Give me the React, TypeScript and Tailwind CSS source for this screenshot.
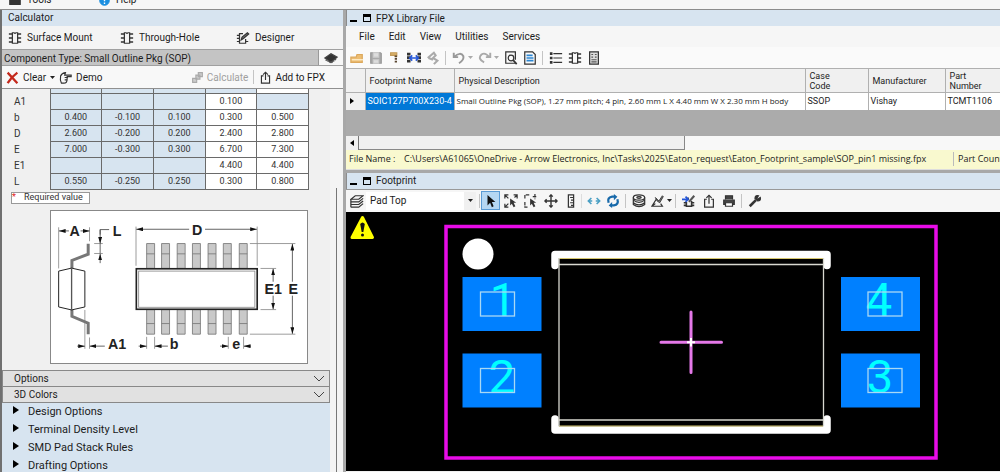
import type { ReactNode } from 'react';

const rows = [
  { name: 'A1', values: ['', '', '', '0.100', ''] },
  { name: 'b', values: ['0.400', '-0.100', '0.100', '0.300', '0.500'] },
  { name: 'D', values: ['2.600', '-0.200', '0.200', '2.400', '2.800'] },
  { name: 'E', values: ['7.000', '-0.300', '0.300', '6.700', '7.300'] },
  { name: 'E1', values: ['', '', '', '4.400', '4.400'] },
  { name: 'L', values: ['0.550', '-0.250', '0.250', '0.300', '0.800'] },
];

const treeItems = ['Design Options', 'Terminal Density Level', 'SMD Pad Stack Rules', 'Drafting Options'];
const menuItems = ['File', 'Edit', 'View', 'Utilities', 'Services'];

function Icon({ children, className = 'size-[14px]' }: { children: ReactNode; className?: string }) {
  return (
    <svg viewBox="0 0 16 16" className={`${className} shrink-0`} fill="none" stroke="#333" strokeWidth="1.4" aria-hidden="true">
      {children}
    </svg>
  );
}

function Tool({ label, children, active = false }: { label: string; children: ReactNode; active?: boolean }) {
  return (
    <button
      type="button"
      aria-label={label}
      className={`flex h-[19px] w-[19px] shrink-0 items-center justify-center ${active ? 'border border-[#5a9bd5] bg-[#b5d7f3]' : ''}`}
    >
      <Icon>{children}</Icon>
    </button>
  );
}

function Separator() {
  return <div className="mx-[3px] h-[14px] w-px shrink-0 bg-[#c4c4c4]" />;
}

function Caret({ gray = false }: { gray?: boolean }) {
  return (
    <svg viewBox="0 0 5 3" className="h-[3px] w-[5px] shrink-0" fill={gray ? '#aaa' : '#222'} aria-hidden="true">
      <path d="M0 0h5L2.500 3z" />
    </svg>
  );
}

function ChipPaths() {
  return (
    <>
      <path d="M5 2h2q1 1.500 2 0h2v12H5z" />
      <path d="M1 3.500h4M1 8h4M1 12.500h4M11 3.500h4M11 8h4M11 12.500h4" strokeWidth="1.8" />
    </>
  );
}

function SharePaths() {
  return (
    <>
      <path d="M5.500 6H3v9h10V6h-2.500M8 11V1.500" />
      <path d="M5 4.500l3-3 3 3" />
    </>
  );
}

function TitleBar({ title }: { title: string }) {
  return (
    <div className="flex h-4 items-center border-l border-[#8c8c8c] bg-[#d7e4f0] pl-[3px]">
      <button type="button" aria-label={`Minimize ${title}`} className="flex h-2 w-[7px] items-end">
        <span className="h-[2px] w-full bg-black" />
      </button>
      <button type="button" aria-label={`Maximize ${title}`} className="ml-[6px] h-2 w-2 border border-t-[3px] border-black" />
      <h2 className="ml-[5px] text-[10px]">{title}</h2>
    </div>
  );
}

function PackageDrawing() {
  const leads = [439, 484, 531, 577, 624, 670, 718];
  return (
    <svg viewBox="151 17 771 458" className="block w-full" role="img" aria-label="Small outline package dimensions">
      <defs>
        <marker id="tip" viewBox="0 0 20 12" refX="20" refY="6" markerWidth="20" markerHeight="12" markerUnits="userSpaceOnUse" orient="auto-start-reverse">
          <path d="M0 0L20 6L0 12z" fill="#111" />
        </marker>
      </defs>
      <g fill="none" stroke="#444" strokeWidth="2.500">
        <path d="M174 66V190M267 66V108M281 115H307M281 145H307M407 64V182M772 64V182M750 115H887M750 388H887M782 190H829M782 314H829M253 315V432M267 398V432M439 396V432M463 396V432M685 396V432M731 396V432" stroke="#888" />
        <path d="M326 73H299V88M299 115V145" />
        <path d="M205 77H175" markerEnd="url(#tip)" />
        <path d="M240 77H267" markerEnd="url(#tip)" />
        <path d="M299 73V115" markerEnd="url(#tip)" />
        <path d="M299 174V146" markerEnd="url(#tip)" />
        <path d="M567 72H408" markerEnd="url(#tip)" />
        <path d="M615 72H771" markerEnd="url(#tip)" />
        <path d="M820 230V191" markerEnd="url(#tip)" />
        <path d="M820 272V313" markerEnd="url(#tip)" />
        <path d="M878 230V116" markerEnd="url(#tip)" />
        <path d="M878 272V387" markerEnd="url(#tip)" />
        <path d="M230 424H253" markerEnd="url(#tip)" />
        <path d="M313 424H268" markerEnd="url(#tip)" />
        <path d="M415 424H439" markerEnd="url(#tip)" />
        <path d="M503 424H464" markerEnd="url(#tip)" />
        <path d="M660 424H685" markerEnd="url(#tip)" />
        <path d="M753 424H732" markerEnd="url(#tip)" />
      </g>
      {/* side view */}
      <path d="M263 116V147L214 166V334L263 355V388" fill="none" stroke="#777" strokeWidth="9" />
      <path d="M174 198L213 189L253 198V306L213 315L174 306z" fill="#fff" stroke="#222" strokeWidth="3" />
      <path d="M213 189V315" stroke="#555" strokeWidth="4" />
      {/* top view */}
      <g fill="#c9c9c9" stroke="#777" strokeWidth="2.500">
        {leads.map((x) => (
          <path key={x} d={`M${x} 115h24v75h-24zM${x} 146h24M${x} 314h24v74h-24zM${x} 356h24`} />
        ))}
      </g>
      <rect x="408" y="191" width="364" height="122" fill="#fff" stroke="#222" strokeWidth="5" />
      <rect x="415" y="198" width="350" height="109" fill="none" stroke="#888" strokeWidth="2.500" />
      <g className="font-['Liberation_Sans',sans-serif]" fontSize="43" fontWeight="700" fill="#222" textAnchor="middle">
        <text x="222" y="92">A</text>
        <text x="350" y="93">L</text>
        <text x="591" y="88">D</text>
        <text x="820" y="268">E1</text>
        <text x="881" y="268">E</text>
        <text x="350" y="434">A1</text>
        <text x="522" y="434">b</text>
        <text x="709" y="434">e</text>
      </g>
    </svg>
  );
}

function Pad({ x, y, tx, pin }: { x: number; y: number; tx: number; pin: string }) {
  return (
    <g>
      <rect x={x} y={y} width="79" height="54" fill="#0080ff" />
      <text x={tx} y={y + 39} fontSize="47" fill="#00ffff" textAnchor="middle">{pin}</text>
      <rect x={x < 700 ? x + 18 : x + 27} y={y + 15} width="34" height="24" fill="none" stroke="#a9d8f4" strokeWidth="1.300" />
    </g>
  );
}

function FootprintCanvas() {
  return (
    <svg viewBox="346 212 654 259" className="block w-full bg-black font-['Roboto',sans-serif]" role="img" aria-label="Footprint view">
      <path d="M362.500 217.500L372.500 237.500H352z" fill="#ffff00" stroke="#ffff00" strokeWidth="3" strokeLinejoin="round" />
      <path d="M360.200 224q2.300-3 4.600 0L363.300 232h-1.600z" fill="#111" />
      <circle cx="362.500" cy="235" r="1.500" fill="#111" />
      <rect x="446" y="226.500" width="490" height="231.500" fill="none" stroke="#e80ce8" strokeWidth="3.500" />
      <circle cx="478" cy="254" r="15.500" fill="#fff" />
      <Pad x={462.5} y={277} tx={503} pin="1" />
      <Pad x={462.5} y={353.5} tx={502} pin="2" />
      <Pad x={841} y={277} tx={879} pin="4" />
      <Pad x={841} y={353.5} tx={880} pin="3" />
      <g fill="none">
        <path d="M555 265.500V254.500H827V265.500M555 419V430H827V419" stroke="#fff" strokeWidth="7.500" strokeLinecap="round" strokeLinejoin="round" />
        <path d="M559 258.500H823M559 426H823" stroke="#d8c870" />
        <path d="M559 258V426M823.500 258V426M559 264.500H823M559 420H823" stroke="#d8d8d0" strokeWidth="1.300" />
        <path d="M661 342.300H721.500M691 312V372.500" stroke="#e478e8" strokeWidth="3" strokeLinecap="round" />
        <path d="M687 342.300H695M691 338V346.500" stroke="#fff" strokeWidth="2" />
      </g>
    </svg>
  );
}

function CalculatorPanel() {
  return (
    <section className="flex w-[343px] shrink-0 flex-col border-l-2 border-[#707070] bg-[#f0f0f0]">
      <h2 className="h-4 bg-[#d7e4f0] pl-[6px] text-[10px] leading-4">Calculator</h2>
      <nav className="flex h-[23px] items-center bg-[#f4f4f4] pl-[6px] text-[10px]">
        <button type="button" className="flex w-[112px] items-center gap-[5px]">
          <Icon><ChipPaths /></Icon>Surface Mount
        </button>
        <button type="button" className="flex w-[116px] items-center gap-[5px]">
          <Icon><ChipPaths /></Icon>Through-Hole
        </button>
        <button type="button" className="flex items-center gap-[5px]">
          <Icon><path d="M8 3H4v11h7V9M1 5h3M1 8.500h3M1 12h3M11 12h3" /><path d="M6 10l1-3 6-5 1.500 1.500-6 5z" fill="#777" /></Icon>Designer
        </button>
      </nav>
      <div className="flex h-[17px] items-stretch border-y border-[#a0a0a0] bg-[#c4c4c4]">
        <h3 className="flex-1 pl-[2px] text-[10px] leading-[17px]">Component Type: Small Outline Pkg (SOP)</h3>
        <button type="button" aria-label="Show package in 3D" className="flex w-[25px] items-center justify-center border-l border-[#999] bg-[#f7f7f7]">
          <Icon className="h-[14px] w-[16px]"><path d="M1 8l7-5 7 4-7 6z" fill="#333" stroke="#444" /><path d="M2 10l6 3.500L14 9" stroke="#555" strokeDasharray="1.500 1" strokeWidth="2" /></Icon>
        </button>
      </div>
      <div className="flex h-[22px] items-center bg-[#f8f8f8] pl-1 text-[10px]">
        <button type="button" className="flex items-center gap-1">
          <Icon className="size-[13px]"><path d="M2 2l12 13M14 2Q7 7 2 15" stroke="#c4291c" strokeWidth="2.800" /></Icon>Clear
          <Caret />
        </button>
        <button type="button" className="ml-1 flex items-center gap-1">
          <Icon className="size-[13px]"><path d="M2 6q2-4 6-4l-1 3h8v2h-5v3q0 5-4 5H3q-2-4-1-9zM7 8h4M7 11h3" /></Icon>Demo
        </button>
        <button type="button" disabled className="ml-auto flex items-center gap-[3px] text-[#a0a0a0]">
          <Icon className="size-[13px]"><path d="M9 2h5v5H9zM2 9h5v5H2zM6 5h5v5H6z" fill="#ccc" stroke="#aaa" /></Icon>Calculate
        </button>
        <div className="mx-[5px] h-[14px] w-px bg-[#c4c4c4]" />
        <button type="button" className="mr-[18px] flex items-center gap-[3px]">
          <Icon className="size-[13px]"><SharePaths /></Icon>Add to FPX
        </button>
      </div>
      <div className="flex flex-1 border-t border-[#909090]">
        <div className="min-w-0 flex-1">
          <div className="pr-[21px] pl-[9px]">
            <table className="w-full table-fixed border-collapse text-[9px] leading-[15px] text-[#333]">
              <colgroup>
                <col className="w-[39px]" />
              </colgroup>
              <tbody>
                <tr className="h-1">
                  <td />
                  {[0, 1, 2, 3].map((i) => (
                    <td key={i} className="border border-t-0 border-[#6a6a6a] bg-[#d7e4f0]" />
                  ))}
                  <td className="border border-t-0 border-[#6a6a6a] bg-white" />
                </tr>
                {rows.map((row) => (
                  <tr key={row.name} className="h-4">
                    <th scope="row" className="pl-[3px] text-left text-[10px] font-normal">{row.name}</th>
                    {row.values.map((value, i) => (
                      <td key={i} className={`border border-[#6a6a6a] p-0 text-center ${i < 3 || !value ? 'bg-[#d7e4f0]' : 'bg-white'}`}>
                        {value}
                      </td>
                    ))}
                  </tr>
                ))}
              </tbody>
            </table>
          </div>
          <div className="mt-[2px] ml-[9px] flex h-3 w-[79px] items-center border border-[#999] bg-white text-[9px] whitespace-nowrap text-[#333]">
            <span className="w-3 text-[#e02020]">*</span>Required value
          </div>
          <div className="mt-[6px] ml-12 w-[258px] border border-[#888] bg-white">
            <PackageDrawing />
          </div>
          <div className="mt-[6px]">
            {['Options', '3D Colors'].map((label) => (
              <button key={label} type="button" className="flex h-4 w-full items-center justify-between border border-b-0 border-[#888] bg-[#e1e1e1] pr-1 pl-[11px] text-[10px]">
                {label}
                <svg viewBox="0 0 12 7" className="h-[7px] w-3" fill="none" stroke="#444" aria-hidden="true">
                  <path d="M1 1l5 5 5-5" />
                </svg>
              </button>
            ))}
          </div>
          <ul className="border-t border-[#888] bg-[#d7e4f0] text-[11px] leading-[18px]">
            {treeItems.map((item) => (
              <li key={item}>
                <button type="button" className="flex w-full items-start pl-[11px] text-left">
                  <svg viewBox="0 0 6 8" className="mt-[3px] mr-[9px] h-2 w-[6px]" aria-hidden="true">
                    <path d="M0 0l6 4-6 4z" />
                  </svg>
                  {item}
                </button>
              </li>
            ))}
          </ul>
        </div>
        <div className="flex w-[13px] flex-col bg-[#f4f4f4] pt-[99px]">
          <div className="w-[7px] flex-1 border-r border-[#777]" />
        </div>
      </div>
    </section>
  );
}

function LibraryPanel() {
  const head = 'border-r border-[#b0b0b0] px-1 text-left align-middle font-normal';
  return (
    <section className="flex flex-col">
      <TitleBar title="FPX Library File" />
      <nav className="flex h-[21px] items-center gap-[14px] bg-[#f6f6f6] pl-[13px] text-[10px]">
        {menuItems.map((item) => (
          <button key={item} type="button">{item}</button>
        ))}
      </nav>
      <div className="flex h-[21px] items-center bg-[#fafafa] pl-px">
        <Tool label="Open"><path d="M1 13V7h6l1-3h6v9z" fill="#edbd72" stroke="#dca85c" /><path d="M2 10h13" stroke="#fff0d0" /></Tool>
        <Tool label="Save"><path d="M2 2h11l1 1v11H2z" fill="#aaa" stroke="#999" /><path d="M5 2h6v5H5zM5 10h6v4H5z" fill="#ddd" stroke="#ccc" /></Tool>
        <Tool label="Build part"><path d="M3 2h7v4H8V5H3z" fill="#d9b06a" stroke="#c39a58" /><path d="M9 5v9" stroke="#5a4630" strokeWidth="2.600" strokeDasharray="2 1" /></Tool>
        <Tool label="Link parts"><path d="M2 2v12M14 2v12" strokeWidth="4" strokeDasharray="3 1" /><path d="M4 8h8M10 5l3 3-3 3M6 5L3 8l3 3" stroke="#2456d8" strokeWidth="1.800" /></Tool>
        <Tool label="Tools"><path d="M2 8l7-6 2 3-3 3 5 3-4 4M3 8l5 2" stroke="#aaa" strokeWidth="2.400" /></Tool>
        <Separator />
        <Tool label="Undo"><path d="M2 2v5h5M2 7q8-7 11-1 1 4-5 8" stroke="#999" strokeWidth="2.200" /></Tool>
        <Caret gray />
        <div className="w-[2px]" />
        <Tool label="Redo"><path d="M14 2v5H9M13 7Q8 1 4 4q-5 5 3 9" stroke="#aaa" strokeWidth="2.200" /></Tool>
        <Caret gray />
        <div className="w-[2px]" />
        <Tool label="Preview"><path d="M13 14H2V1h11v9" /><circle cx="8" cy="8" r="3.200" /><path d="M10.500 10.500l4 4.500" strokeWidth="2" /></Tool>
        <Tool label="Report"><path d="M2 1h9l3 3v11H2z" /><path d="M4 5h7M4 8h8M4 11h8" stroke="#2d87d3" strokeWidth="1.800" /></Tool>
        <Separator />
        <Tool label="List"><path d="M5 3h10M5 8h10M5 13h10" /><path d="M1 3h3M1 8h3M1 13h3" strokeWidth="3" /></Tool>
        <Tool label="Component"><ChipPaths /></Tool>
        <Tool label="Calculator"><path d="M3 1h10v14H3z" fill="#ddd" /><path d="M5 4h2M9 4h2M5 7h2M9 7h2M5 10h6M5 12.500h6" stroke="#555" /></Tool>
      </div>
      <div className="overflow-hidden bg-[#ababab] pb-[26px]">
        <table className="w-full table-fixed border-collapse text-[9px] leading-[10px] text-[#222]">
          <colgroup>
            <col className="w-[19px]" />
            <col className="w-[89px]" />
            <col />
            <col className="w-[63px]" />
            <col className="w-[77px]" />
            <col className="w-[55px]" />
          </colgroup>
          <thead>
            <tr className="h-6 border-y border-[#b0b0b0] bg-[#f0f0f0]">
              <td className="border-r border-[#b0b0b0]" />
              <th scope="col" className={head}>Footprint Name</th>
              <th scope="col" className={head}>Physical Description</th>
              <th scope="col" className={head}>Case<br />Code</th>
              <th scope="col" className={head}>Manufacturer</th>
              <th scope="col" className="px-1 text-left font-normal">Part<br />Number</th>
            </tr>
          </thead>
          <tbody>
            <tr className="h-[17px] bg-white whitespace-nowrap">
              <td className="border-r border-[#b0b0b0] bg-[#f0f0f0] p-0">
                <svg viewBox="0 0 4 6" className="ml-1 h-[6px] w-1" aria-hidden="true"><path d="M0 0l4 3-4 3z" /></svg>
              </td>
              <td className="border-r border-[#b0b0b0] bg-[#0078d7] px-[2px] text-white">SOIC127P700X230-4</td>
              <td className="border-r border-[#b0b0b0] px-[2px] font-['Open_Sans',sans-serif] text-[8px]">Small Outline Pkg (SOP), 1.27 mm pitch; 4 pin, 2.60 mm L X 4.40 mm W X 2.30 mm H body</td>
              <td className="border-r border-[#b0b0b0] px-[2px]">SSOP</td>
              <td className="border-r border-[#b0b0b0] px-[2px]">Vishay</td>
              <td className="px-[2px]">TCMT1106</td>
            </tr>
          </tbody>
        </table>
      </div>
      <div className="flex h-[14px] bg-[#f8f8f8]">
        <button type="button" aria-label="Scroll left" className="flex w-[13px] items-center justify-center border-r border-[#777] bg-[#f0f0f0]">
          <svg viewBox="0 0 4 6" className="h-[6px] w-1" aria-hidden="true"><path d="M4 0L0 3l4 3z" /></svg>
        </button>
        <div className="w-[326px] border-r border-b border-[#888] bg-[#f0f0f0]" />
      </div>
      <div className="flex h-5 items-center overflow-hidden border-b border-[#ddd] bg-[#f9f9cf] pl-[3px] font-['Open_Sans',sans-serif] text-[9px] whitespace-nowrap">
        <span className="w-[55px] shrink-0">File Name :</span>
        <span className="min-w-0 flex-1">C:\Users\A61065\OneDrive - Arrow Electronics, Inc\Tasks\2025\Eaton_request\Eaton_Footprint_sample\SOP_pin1 missing.fpx</span>
        <span className="w-[47px] shrink-0 overflow-hidden border-l border-[#bbb] pl-1">Part Count</span>
      </div>
    </section>
  );
}

function FootprintPanel() {
  return (
    <section className="flex flex-col border-t-[3px] border-[#a8a8a8]">
      <TitleBar title="Footprint" />
      <div className="flex h-[23px] items-center border-t border-[#999] bg-[#f6f6f6] pl-px">
        <Tool label="Layers"><path d="M6 2h9l-5 4H1zM1 9h9l5-4M1 12h9l5-4M1 15h9l5-4M1 6v9" /></Tool>
        <div className="relative h-[18px] w-[110px]">
          <select aria-label="Layer" className="block h-full w-full appearance-none bg-white pl-1 text-[10px] leading-[18px]" defaultValue="Pad Top">
            <option>Pad Top</option>
          </select>
          <span className="pointer-events-none absolute inset-y-0 right-0 flex w-3 items-center justify-center bg-[#f0f0f0]"><Caret /></span>
        </div>
        <div className="ml-[3px] h-[14px] w-px bg-[#c4c4c4]" />
        <div className="ml-px flex gap-px">
          <Tool label="Select" active><path d="M4 1v12l3-3 2 5 2-1-2-5h4z" fill="#111" stroke="none" /></Tool>
          <Tool label="Zoom extents"><path d="M1 5V1h4M1 1l4 4M11 1h4v4M15 1l-3 3M1 11v4h4M1 15l4-4" /><path d="M7 5v8l2-2 2 4 2-1-2-4h3z" fill="#333" stroke="none" /></Tool>
          <Tool label="Zoom window"><path d="M1 5V1h5M1 9v6h4M10 3h5M12.500 0v6" strokeDasharray="4 1" /><path d="M7 5v8l2-2 2 4 2-1-2-4h3z" fill="#333" stroke="none" /></Tool>
          <Tool label="Pan"><path d="M8 1v14M1 8h14M6 3l2-2 2 2M6 13l2 2 2-2M3 6L1 8l2 2M13 6l2 2-2 2" strokeWidth="1.600" /></Tool>
          <Tool label="Measure"><path d="M5 1h6v14H5zM7 4h4M8 7h3M7 10h4M8 13h3" /></Tool>
        </div>
        <div className="mr-[2px] ml-px h-[14px] w-px bg-[#ddd]" />
        <Tool label="Flip"><path d="M2 8h4M10 8h4M5 4.500L1.500 8 5 11.500M11 4.500L14.500 8 11 11.500" stroke="#4a9fc4" strokeWidth="1.800" /></Tool>
        <Tool label="Rotate"><path d="M3 10Q1 4 7 3h3M13 6q2 6-4 7H6" stroke="#1769aa" strokeWidth="2.600" /><path d="M9 0l4 3-4 4zM7 9l-4 4 4 3z" fill="#1769aa" stroke="none" /></Tool>
        <Separator />
        <Tool label="Pad stack"><ellipse cx="8" cy="4" rx="6.500" ry="3" /><ellipse cx="8" cy="4" rx="2.500" ry="1" /><path d="M1.500 4v8q6.500 5 13 0V4M1.500 7q6.500 5 13 0M1.500 10q6.500 5 13 0" /></Tool>
        <Tool label="Draw"><path d="M6 6L1 14h12l-2-3M1 14l4-3" /><path d="M5 4l4 4 4-6 1 1-4 7-3-2z" fill="#777" strokeWidth="1" /></Tool>
        <Caret />
        <Separator />
        <div className="flex gap-px">
          <Tool label="Export part"><path d="M5 9v5h6V8M7 7V4M11 13h3M11 10h3M2 10h3M2 13h3" strokeWidth="1.800" /><path d="M0 6h6M4 3l3 3-3 3" stroke="#2456d8" strokeWidth="2" /><path d="M8 9l6-7" strokeWidth="2.400" stroke="#555" /></Tool>
          <Tool label="Share"><SharePaths /></Tool>
          <Tool label="Print"><path d="M4 6V2h8v4M2 7h12v5H2z" fill="#444" /><path d="M4 10h8v4H4z" fill="#fff" /></Tool>
        </div>
        <Separator />
        <Tool label="Settings"><path d="M2 14l7-7" strokeWidth="3" /><path d="M14 4l-3 2-1-1 2-3Q8 1 8 5l3 3q4 0 3-4z" fill="#333" /></Tool>
      </div>
      <FootprintCanvas />
    </section>
  );
}

export default function App() {
  return (
    <div className="min-h-screen overflow-hidden bg-[#f0f0f0] font-['Roboto','Open_Sans',sans-serif] text-[#1c1c1c]">
      <header className="flex h-[10px] items-end overflow-hidden border-b border-[#8c8c8c] bg-[#f6f6f6] pb-px text-[10px] leading-4">
        <button type="button" className="flex w-[85px] items-center gap-[6px] pl-[9px]">
          <Icon className="size-[12px]"><path d="M1 3h14v11H1z" fill="#333" /></Icon>Tools
        </button>
        <button type="button" className="flex items-center gap-[6px] pl-[14px]">
          <Icon className="size-[11px]"><circle cx="8" cy="8" r="7" fill="#1b8fe0" stroke="#1b8fe0" /><path d="M8 4v5M8 11v2" stroke="#fff" strokeWidth="2" /></Icon>Help
        </button>
      </header>
      <div className="flex">
        <CalculatorPanel />
        <main className="min-w-0 flex-1 border-l-[3px] border-[#a8a8a8]">
          <LibraryPanel />
          <FootprintPanel />
        </main>
      </div>
    </div>
  );
}
